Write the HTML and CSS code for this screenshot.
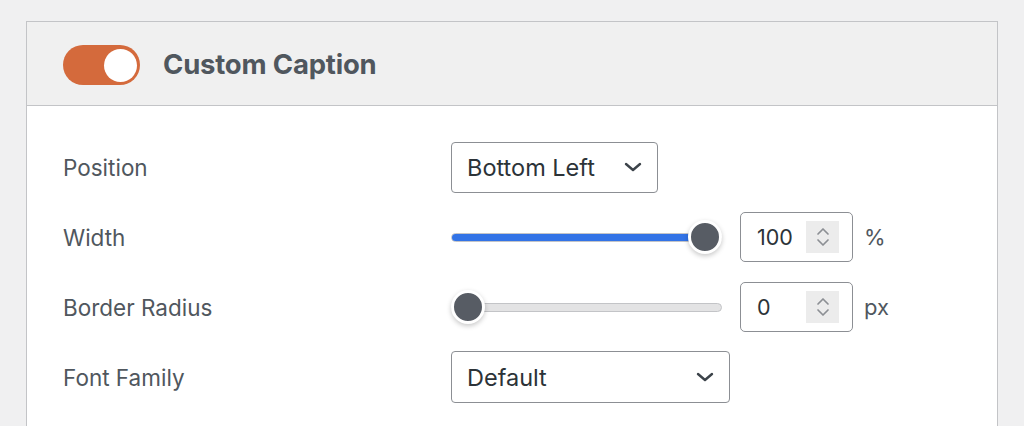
FILE: index.html
```html
<!DOCTYPE html>
<html>
<head>
<meta charset="utf-8">
<link rel="stylesheet" href="styles.css">
</head>
<body>
<div class="panel">
  <div class="panel-header">
    <div class="toggle"><span class="knob"></span></div>
    <h2 class="title">Custom Caption</h2>
  </div>
  <div class="panel-body">
    <div class="label">Position</div>
    <div class="control">
      <div class="select select-pos">
        <span>Bottom Left</span>
        <svg class="chev" width="18" height="10" viewBox="0 0 18 10"><path d="M2 2 L9 8 L16 2" fill="none" stroke="#3c434a" stroke-width="2.4" stroke-linecap="round" stroke-linejoin="round"/></svg>
      </div>
    </div>

    <div class="label">Width</div>
    <div class="control">
      <div class="slider">
        <div class="track"><div class="fill" style="width: 254px"></div></div>
        <span class="thumb" style="left: 237px"></span>
      </div>
      <div class="number">
        <span>100</span>
        <span class="spin">
          <svg width="16" height="24" viewBox="0 0 16 24"><path d="M3 9 L8 4 L13 9 M3 15 L8 20 L13 15" fill="none" stroke="#8c8f94" stroke-width="1.7" stroke-linecap="round" stroke-linejoin="round"/></svg>
        </span>
      </div>
      <span class="unit">%</span>
    </div>

    <div class="label">Border Radius</div>
    <div class="control">
      <div class="slider">
        <div class="track"><div class="fill" style="width: 0px"></div></div>
        <span class="thumb" style="left: 0px"></span>
      </div>
      <div class="number">
        <span>0</span>
        <span class="spin">
          <svg width="16" height="24" viewBox="0 0 16 24"><path d="M3 9 L8 4 L13 9 M3 15 L8 20 L13 15" fill="none" stroke="#8c8f94" stroke-width="1.7" stroke-linecap="round" stroke-linejoin="round"/></svg>
        </span>
      </div>
      <span class="unit">px</span>
    </div>

    <div class="label">Font Family</div>
    <div class="control">
      <div class="select select-font">
        <span>Default</span>
        <svg class="chev" width="18" height="10" viewBox="0 0 18 10"><path d="M2 2 L9 8 L16 2" fill="none" stroke="#3c434a" stroke-width="2.4" stroke-linecap="round" stroke-linejoin="round"/></svg>
      </div>
    </div>
  </div>
</div>
</body>
</html>
```

FILE: styles.css
```css
html, body {
  margin: 0;
  padding: 0;
  background: #f0f0f1;
  font-family: Inter, "Liberation Sans", Arial, sans-serif;
  height: 426px;
  overflow: hidden;
}

.panel {
  margin: 21px 0 0 26px;
  width: 970px;
  height: 404px;
  border: 1px solid #c3c4c7;
  border-bottom: none;
  background: #ffffff;
}

.panel-header {
  display: flex;
  align-items: center;
  gap: 23px;
  height: 83px;
  padding-left: 36px;
  background: #f0f0f0;
  border-bottom: 1px solid #c3c4c7;
}

.toggle {
  width: 77px;
  height: 40px;
  border-radius: 20px;
  background: #d46a3c;
  display: flex;
  align-items: center;
  justify-content: flex-end;
  padding-right: 3px;
  box-sizing: border-box;
  margin-top: 3px;
}

.knob {
  width: 33px;
  height: 33px;
  border-radius: 50%;
  background: #ffffff;
}

.title {
  margin: 0;
  font-size: 27.5px;
  font-weight: 700;
  color: #50575e;
  letter-spacing: -0.2px;
}

.panel-body {
  display: grid;
  grid-template-columns: 388px auto;
  grid-auto-rows: 50px;
  row-gap: 20px;
  padding: 36px 0 0 36px;
}

.label {
  display: flex;
  align-items: center;
  font-size: 22.5px;
  color: #50575e;
}

.control {
  display: flex;
  align-items: center;
}

.select {
  box-sizing: border-box;
  height: 51px;
  border: 1px solid #8c8f94;
  border-radius: 4px;
  display: flex;
  align-items: center;
  justify-content: space-between;
  padding: 0 15px 0 15px;
  font-size: 23.5px;
  color: #2c3338;
  background: #fff;
}

.select-pos { width: 207px; }
.select-font { width: 279px; height: 52px; }

.slider {
  position: relative;
  width: 271px;
  height: 34px;
  display: flex;
  align-items: center;
  margin-right: 18px;
}

.track {
  width: 100%;
  height: 9px;
  border-radius: 5px;
  background: #e3e3e4;
  border: 1px solid #c3c4c7;
  box-sizing: border-box;
  overflow: hidden;
}

.fill {
  height: 100%;
  background: #3273e6;
}

.thumb {
  position: absolute;
  top: 0;
  width: 34px;
  height: 34px;
  box-sizing: border-box;
  border-radius: 50%;
  background: #575c64;
  border: 3px solid #ffffff;
  box-shadow: 0 2px 5px rgba(0, 0, 0, 0.22);
}

.number {
  box-sizing: border-box;
  width: 113px;
  height: 50px;
  border: 1px solid #8c8f94;
  border-radius: 5px;
  display: flex;
  align-items: center;
  justify-content: space-between;
  padding: 0 13px 0 16px;
  font-size: 21.5px;
  color: #2c3338;
  background: #fff;
}

.spin {
  width: 33px;
  height: 32px;
  background: #ececec;
  display: flex;
  align-items: center;
  justify-content: center;
}

.unit {
  margin-left: 11px;
  font-size: 22px;
  color: #50575e;
}
```
